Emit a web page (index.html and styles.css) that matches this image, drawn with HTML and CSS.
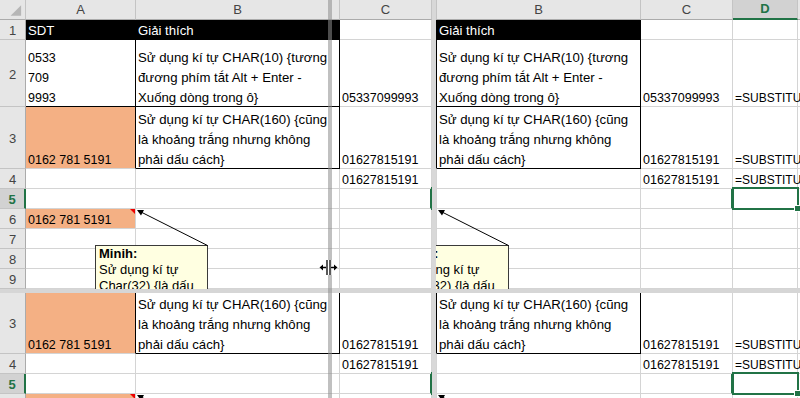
FILE: index.html
```html
<!DOCTYPE html>
<html lang="vi">
<head>
    <meta charset="UTF-8">
    <meta name="viewport" content="width=device-width, initial-scale=1.0">
    <title>Book1 - Excel</title>
    <link rel="stylesheet" href="styles.css">
</head>
<body>
    <div class="window">
        <div class="pane pane-tl"></div>
        <div class="bar bar-v"></div>
        <div class="pane pane-tr"></div>
        <div class="bar bar-h"></div>
        <div class="pane pane-bl"></div>
        <div class="pane pane-br"></div>

        <div class="split-shade"></div>
        <svg class="cursor" width="19" height="17" viewBox="0 0 19 17">
            <g stroke="#fff" stroke-width="3" fill="none">
                <path d="M8 1v15M11 1v15M1 8.5h6M12 8.5h6"/>
            </g>
            <g stroke="#000" stroke-width="1.3" fill="none">
                <path d="M8 1v15M11 1v15M2 8.5h5M12 8.5h5"/>
            </g>
            <path d="M0.5 8.5l3.5-3v6z M18.5 8.5l-3.5-3v6z" fill="#000"/>
        </svg>
    </div>

    <template id="sheetTpl">
        <div class="sheet">
            <!-- tiêu đề cột -->
            <div class="c h corner">
                <svg width="26" height="19" viewBox="0 0 26 19"><polygon points="22,5 22,16 11,16" fill="#b6b6b6"/></svg>
            </div>
            <div class="c h">A</div>
            <div class="c h">B</div>
            <div class="c h">C</div>
            <div class="c h h-sel">D</div>
            <div class="c h">E</div>

            <div class="c rh">1</div>
            <div class="c dark"><span>SDT</span></div>
            <div class="c dark"><span>Giải thích</span></div>
            <div class="c"></div>
            <div class="c"></div>
            <div class="c"></div>

            <div class="c rh">2</div>
            <div class="c num box-r box-b"><div>0533<br>709<br>9993</div></div>
            <div class="c box-r box-b"><div>Sử dụng kí tự CHAR(10) {tương<br>đương phím tắt Alt + Enter -<br>Xuống dòng trong ô}</div></div>
            <div class="c num"><span>05337099993</span></div>
            <div class="c fx"><span>=SUBSTITUTE(B2,CHAR(10),"")</span></div>
            <div class="c"></div>

            <div class="c rh">3</div>
            <div class="c num orange box-r"><span>0162 781 5191</span></div>
            <div class="c box-r box-b"><div>Sử dụng kí tự CHAR(160) {cũng<br>là khoảng trắng nhưng không<br>phải dấu cách}</div></div>
            <div class="c num"><span>01627815191</span></div>
            <div class="c fx"><span>=SUBSTITUTE(A3,CHAR(160),"")</span></div>
            <div class="c"></div>

            <div class="c rh">4</div>
            <div class="c"></div>
            <div class="c"></div>
            <div class="c num"><span>01627815191</span></div>
            <div class="c fx"><span>=SUBSTITUTE(A4," ","")</span></div>
            <div class="c"></div>

            <div class="c rh rh-sel">5</div>
            <div class="c"></div>
            <div class="c"></div>
            <div class="c row-mark"></div>
            <div class="c sel"></div>
            <div class="c"></div>

            <div class="c rh">6</div>
            <div class="c num orange note"><span>0162 781 5191</span></div>
            <div class="c"></div>
            <div class="c"></div>
            <div class="c"></div>
            <div class="c"></div>

            <div class="c rh">7</div>
            <div class="c"></div><div class="c"></div><div class="c"></div><div class="c"></div><div class="c"></div>
            <div class="c rh">8</div>
            <div class="c"></div><div class="c"></div><div class="c"></div><div class="c"></div><div class="c"></div>
            <div class="c rh">9</div>
            <div class="c"></div><div class="c"></div><div class="c"></div><div class="c"></div><div class="c"></div>
            <div class="c rh">10</div>
            <div class="c"></div><div class="c"></div><div class="c"></div><div class="c"></div><div class="c"></div>

            <!-- ghi chú của ô A6 -->
            <div class="comment">
                <b>Minih:</b><br>
                Sử dụng kí tự<br>
                Char(32) {là dấu<br>
                cách thông thường}
            </div>
            <svg class="comment-arrow" width="220" height="260" viewBox="0 0 220 260">
                <line x1="207.5" y1="245.5" x2="140" y2="211.5" stroke="#000" stroke-width="1"/>
                <polygon points="137,210 141,215.5 144,210" fill="#000"/>
            </svg>
        </div>
    </template>

    <script>
        // mỗi ô cửa sổ chia tách hiển thị cùng một bảng tính
        const tpl = document.getElementById('sheetTpl');
        document.querySelectorAll('.pane').forEach(function(pane) {
            pane.appendChild(tpl.content.cloneNode(true));
        });
    </script>
</body>
</html>
```

FILE: styles.css
```css
body {
    margin: 0;
    background: #fff;
    overflow: hidden;
    font-family: "Liberation Sans", Arial, sans-serif;
}
.window {
    position: relative;
    display: grid;
    grid-template-columns: 432px 4px 364px;
    grid-template-rows: 289px 4px 105px;
    width: 800px;
    height: 398px;
    overflow: hidden;
}
.pane {
    overflow: hidden;
}
.pane-tl { grid-area: 1 / 1; }
.pane-tr { grid-area: 1 / 3; }
.pane-bl { grid-area: 3 / 1; }
.pane-br { grid-area: 3 / 3; }
.bar-v {
    grid-column: 2;
    grid-row: 1 / 4;
    background: #d8d8d8;
}
.bar-h {
    grid-column: 1 / 4;
    grid-row: 2;
    background: #d6d6d6;
}
/* vị trí cuộn của từng ô */
.pane-tr .sheet,
.pane-br .sheet {
    margin-left: -135px;
}
.pane-bl .sheet,
.pane-br .sheet {
    margin-top: -108px;
}
.split-shade {
    position: absolute;
    left: 328px;
    top: 0;
    width: 4px;
    height: 398px;
    background: rgba(140, 140, 140, 0.55);
}
.cursor {
    position: absolute;
    left: 319px;
    top: 259px;
}

.sheet {
    position: relative;
    display: grid;
    grid-template-columns: 26px 110px 204px 92px 65px 300px;
    grid-template-rows: 20px 20px 67px 62px repeat(7, 20px);
    width: 797px;
}
.c {
    box-sizing: border-box;
    display: flex;
    align-items: flex-end;
    padding: 0 2px;
    border-right: 1px solid #d4d4d4;
    border-bottom: 1px solid #d4d4d4;
    font-size: 13.2px;
    line-height: 20px;
    color: #000;
    white-space: nowrap;
}
/* chữ Calibri nằm thấp hơn trong ô */
.c > span,
.c > div {
    margin-bottom: -2px;
}
.num {
    font-size: 12.5px;
}
.fx {
    font-size: 12px;
}
.h,
.rh {
    justify-content: center;
    align-items: center;
    padding: 0;
    background: #e6e6e6;
    border-right-color: #c4c4c4;
    border-bottom-color: #c4c4c4;
    font-size: 13px;
    color: #444;
}
.h {
    border-bottom-color: #ababab;
}
.rh {
    padding-top: 3px;
    border-right-color: #ababab;
}
.corner {
    align-items: stretch;
}
.h-sel {
    background: #d2d2d2;
    color: #217346;
    font-weight: bold;
    border-bottom: 2px solid #217346;
}
.rh-sel {
    background: #d2d2d2;
    color: #217346;
    font-weight: bold;
    border-right: 2px solid #217346;
}
.dark {
    background: #000;
    color: #fff;
    border-color: #000;
}
.orange {
    background: #f4b084;
}
.box-r {
    border-right-color: #000;
}
.box-b {
    border-bottom-color: #000;
}
.row-mark {
    border-right: 2px solid #217346;
}
.note,
.sel {
    position: relative;
}
.note::after {
    content: "";
    position: absolute;
    top: 0;
    right: 0;
    border-left: 5px solid transparent;
    border-top: 5px solid #e00;
}
.sel::after {
    content: "";
    position: absolute;
    left: -1px;
    top: -2px;
    right: -2px;
    bottom: -2px;
    border: 2px solid #217346;
}
.sel::before {
    content: "";
    position: absolute;
    right: -4px;
    bottom: -4px;
    width: 5px;
    height: 5px;
    background: #217346;
    border: 1px solid #fff;
    z-index: 1;
}

.comment {
    position: absolute;
    left: 95px;
    top: 245px;
    width: 113px;
    height: 100px;
    box-sizing: border-box;
    padding: 0 3px;
    background: #ffffe1;
    border: 1px solid #3a3a3a;
    font-size: 13px;
    line-height: 16px;
    color: #000;
}
.comment-arrow {
    position: absolute;
    left: 0;
    top: 0;
    pointer-events: none;
}
```
